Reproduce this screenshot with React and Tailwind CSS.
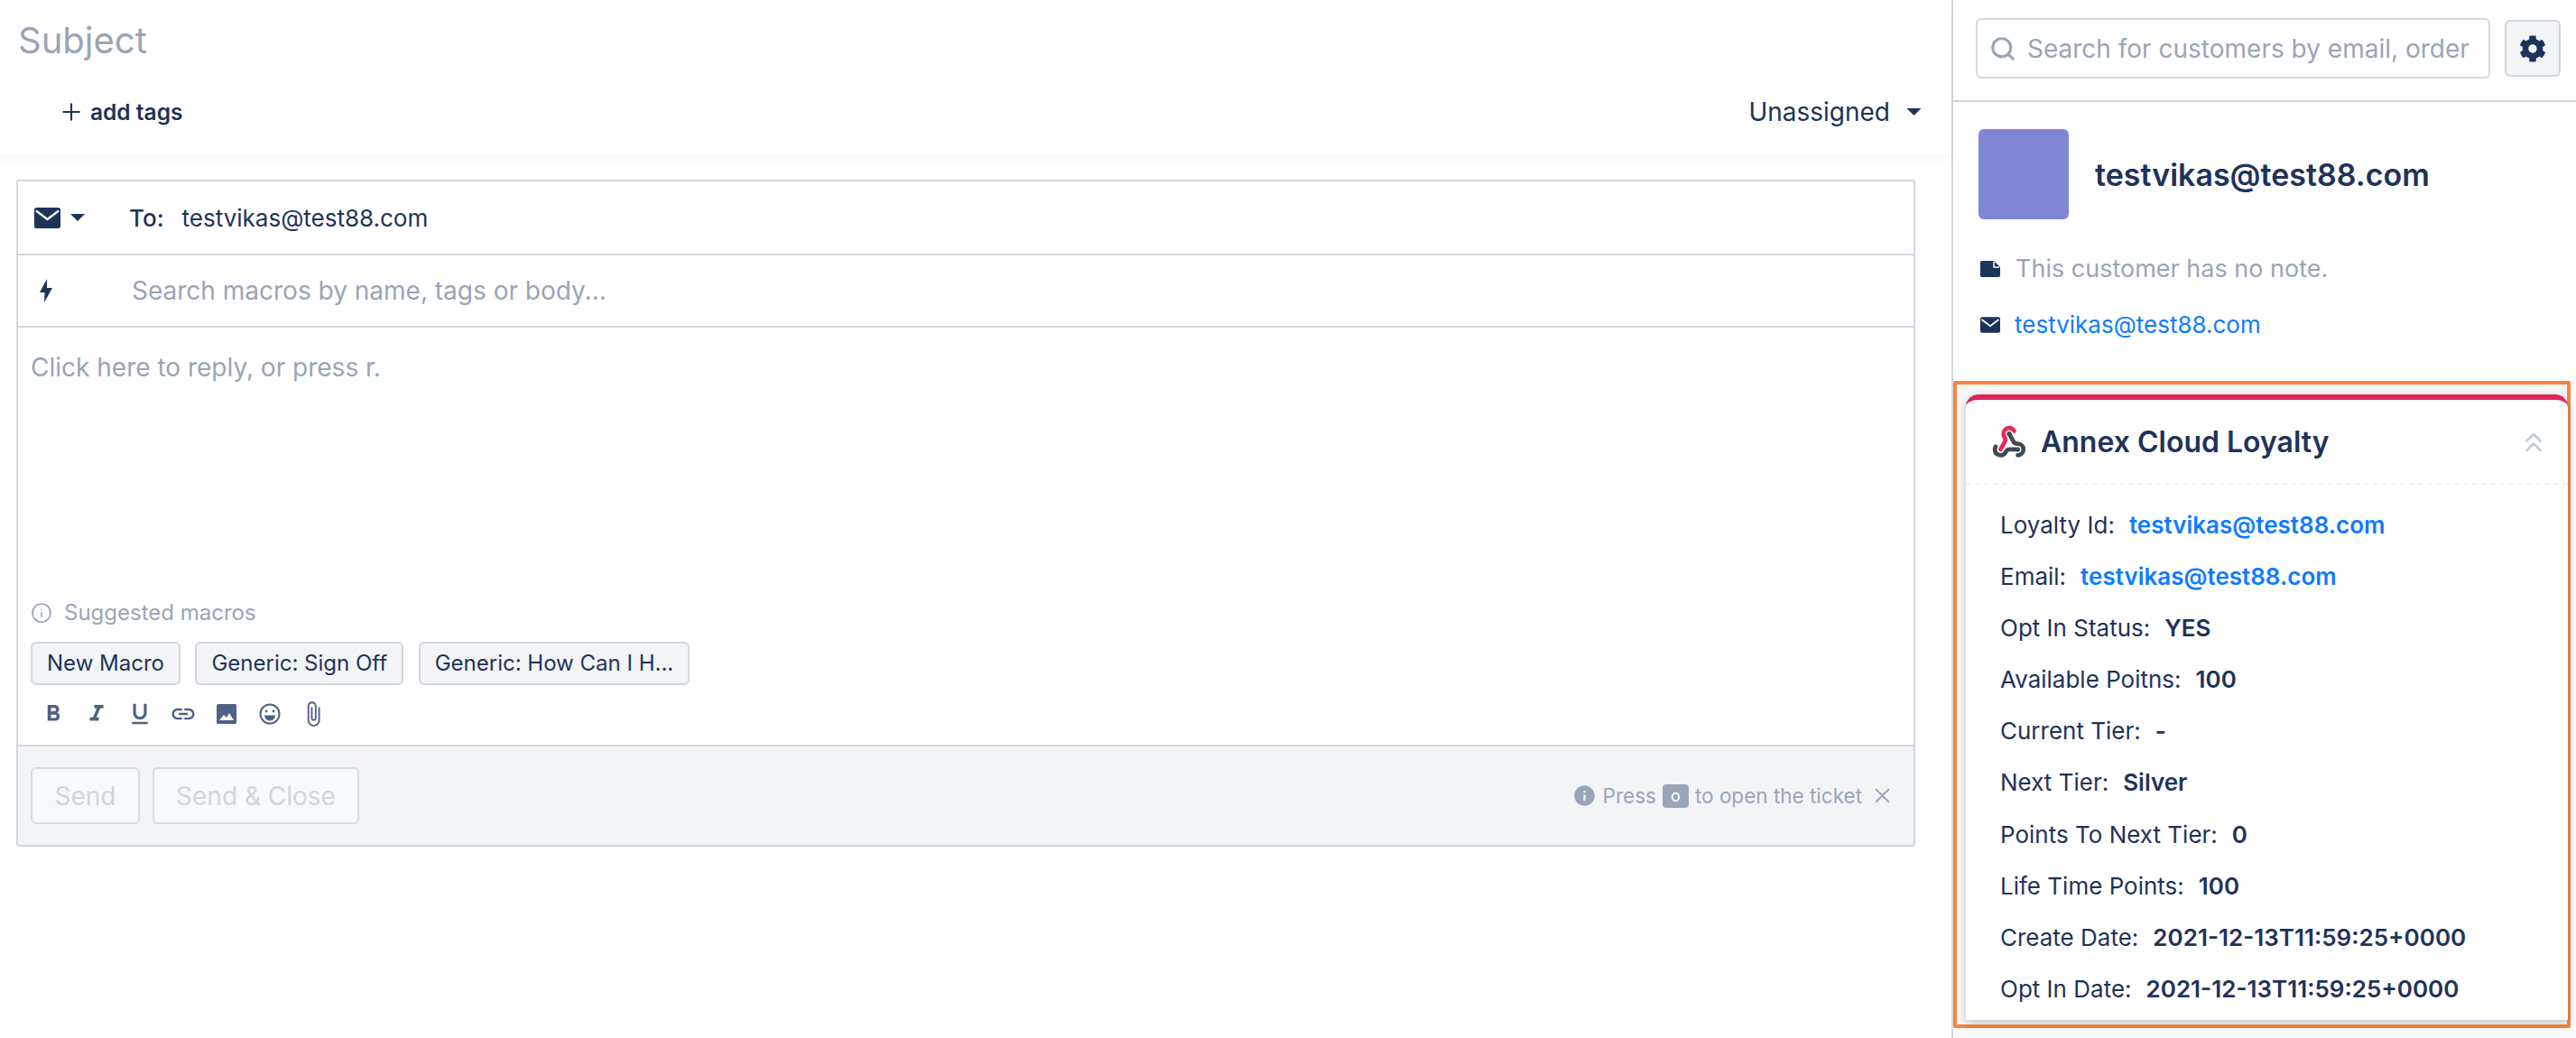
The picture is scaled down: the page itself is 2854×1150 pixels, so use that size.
import { Search, Plus, X, Info, ChevronsUp } from "lucide-react";
import { FaCog } from "react-icons/fa";
import {
  MdFormatBold,
  MdFormatItalic,
  MdFormatUnderlined,
  MdLink,
  MdAttachFile,
  MdInfo,
} from "react-icons/md";

const MailIcon = ({ className }) => (
  <svg viewBox="0 0 29 23" className={className}>
    <rect width="29" height="23" rx="2.5" fill="#1e3359" />
    <path d="M2 3.5 14.5 13 27 3.5" fill="none" stroke="#fff" strokeWidth="2.4" />
  </svg>
);

const Caret = ({ className }) => (
  <svg viewBox="0 0 16 8" className={className}>
    <path d="M0 0h16L8 8z" fill="#1e3359" />
  </svg>
);

const rows = [
  ["Loyalty Id:", "testvikas@test88.com", true],
  ["Email:", "testvikas@test88.com", true],
  ["Opt In Status:", "YES"],
  ["Available Poitns:", "100"],
  ["Current Tier:", "-"],
  ["Next Tier:", "Silver"],
  ["Points To Next Tier:", "0"],
  ["Life Time Points:", "100"],
  ["Create Date:", "2021-12-13T11:59:25+0000"],
  ["Opt In Date:", "2021-12-13T11:59:25+0000"],
];

const macros = ["New Macro", "Generic: Sign Off", "Generic: How Can I H..."];

export default function App() {
  return (
    <div className="flex h-[1150px] w-full overflow-hidden bg-white font-['Inter',sans-serif] text-[#1e3359]">
      <div className="w-[2162px] shrink-0">
        <div className="relative h-[171px] shadow-[0_6px_10px_rgba(30,51,89,0.035)]">
          <div className="pl-[20px] pt-[22px] text-[40px] leading-[46px] font-normal text-[#99a5b6]">Subject</div>
          <div className="mt-[41px] flex items-center justify-between pl-[64px] pr-[33px]">
            <div className="flex items-center gap-[6px] text-[24.5px] leading-[30px] font-semibold">
              <Plus className="h-[30px] w-[30px]" strokeWidth={1.7} />
              add tags
            </div>
            <div className="flex items-center gap-[18px] text-[28px] leading-[30px]">
              Unassigned
              <Caret className="h-[8px] w-[17px]" />
            </div>
          </div>
        </div>

        <div className="ml-[18px] mt-[28px] h-[739px] w-[2104px] rounded-[3px] border-2 border-[#d2d7de]">
          <div className="flex h-[82px] items-center border-b-2 border-[#d2d7de] pl-[18px] text-[26px]">
            <MailIcon className="h-[23px] w-[29px]" />
            <Caret className="ml-[11px] h-[8px] w-[16px]" />
            <span className="ml-[49px] font-medium">To:</span>
            <span className="ml-[20px]">testvikas@test88.com</span>
          </div>
          <div className="flex h-[80px] items-center border-b-2 border-[#d2d7de] pl-[24px] text-[28px] text-[#99a5b6]">
            <svg viewBox="0 0 14 26" className="h-[26px] w-[14px]">
              <path d="M8 0 0 15h5.5L5 26l9-16H8z" fill="#1e3359" />
            </svg>
            <span className="ml-[88px]">Search macros by name, tags or body...</span>
          </div>
          <div className="flex h-[464px] flex-col border-b-2 border-[#d2d7de] pl-[14px]">
            <div className="mt-[29px] text-[28px] leading-[30px] text-[#99a5b6]">Click here to reply, or press r.</div>
            <div className="mt-[243px] flex items-center gap-[13px] text-[24px] leading-[28px] text-[#99a5b6]">
              <Info className="h-[24px] w-[24px]" strokeWidth={1.7} />
              Suggested macros
            </div>
            <div className="mt-[18px] flex gap-[16.5px]">
              {macros.map((m) => (
                <div
                  key={m}
                  className="flex h-[48px] items-center rounded-[6px] border-2 border-[#d2d7de] bg-[#f3f4f6] px-[16px] text-[24px]"
                >
                  {m}
                </div>
              ))}
            </div>
            <div className="mt-[17px] flex items-center gap-[18px] pl-[10px] text-[#4f6285]">
              <MdFormatBold className="h-[30px] w-[30px]" />
              <MdFormatItalic className="h-[30px] w-[30px]" />
              <MdFormatUnderlined className="h-[30px] w-[30px]" />
              <MdLink className="h-[30px] w-[30px]" />
              <svg viewBox="0 0 22 22" className="mx-[4px] h-[22px] w-[22px]">
                <rect width="22" height="22" rx="1.5" fill="#4f6285" />
                <path d="M3 18l5-6 3 3 3-5 5 8z" fill="#fff" />
              </svg>
              <svg viewBox="0 0 24 24" className="mx-[3px] h-[24px] w-[24px]" fill="none" stroke="#4f6285" strokeWidth="2">
                <circle cx="12" cy="12" r="10.5" />
                <circle cx="8" cy="9" r="1.4" fill="#4f6285" stroke="none" />
                <circle cx="16" cy="9" r="1.4" fill="#4f6285" stroke="none" />
                <path d="M6 13.5h12c0 3.5-2.6 6-6 6s-6-2.5-6-6z" fill="#4f6285" stroke="none" />
              </svg>
              <MdAttachFile className="h-[30px] w-[30px]" />
            </div>
          </div>
          <div className="flex h-[109px] items-center justify-between bg-[#f3f4f6] pl-[14px] pr-[21px]">
            <div className="flex gap-[14px] text-[28px] text-[#d0d5dd]">
              <div className="flex h-[63px] w-[121px] items-center justify-center rounded-[6px] border-2 border-[#d8dce2] bg-[#f8f9fa]">
                Send
              </div>
              <div className="flex h-[63px] w-[229px] items-center justify-center rounded-[6px] border-2 border-[#d8dce2] bg-[#f8f9fa]">
                Send &amp; Close
              </div>
            </div>
            <div className="flex items-center text-[22.5px] text-[#99a5b6]">
              <MdInfo className="mr-[7px] h-[27px] w-[27px]" />
              Press
              <span className="mx-[7px] flex h-[26px] w-[29px] items-center justify-center rounded-[4px] bg-[#99a5b6] text-[18px] text-white">
                o
              </span>
              to open the ticket
              <X className="ml-[9px] h-[27px] w-[27px]" strokeWidth={1.6} />
            </div>
          </div>
        </div>
      </div>

      <div className="min-w-0 flex-1 border-l-2 border-[#d2d7de] bg-[#fafafb]">
        <div className="flex h-[113px] items-center gap-[16px] border-b-2 border-[#d2d7de] bg-white pb-[4px] pl-[25px]">
          <div className="flex h-[67px] w-[570px] items-center rounded-[6px] border-2 border-[#d2d7de] pl-[13px] text-[28px] text-[#99a5b6]">
            <Search className="h-[30px] w-[30px]" strokeWidth={2.5} />
            <span className="ml-[12px] whitespace-nowrap">Search for customers by email, order</span>
          </div>
          <div className="flex h-[63px] w-[62px] items-center justify-center rounded-[6px] border-2 border-[#d2d7de] bg-[#f3f4f6]">
            <FaCog className="h-[30px] w-[30px]" />
          </div>
        </div>
        <div className="h-[309px] bg-white pl-[28px] pt-[30px]">
          <div className="flex items-center gap-[29px]">
            <div className="h-[100px] w-[100px] rounded-[6px] bg-[#8088d6]" />
            <div className="pt-[1px] text-[34px] font-semibold">testvikas@test88.com</div>
          </div>
          <div className="mt-[38px] flex items-center text-[27px] leading-[34px] text-[#99a5b6]">
            <svg viewBox="0 0 22 18" className="ml-[2px] h-[18px] w-[22px]">
              <path d="M2 0h13l7 7v9a2 2 0 0 1-2 2H2a2 2 0 0 1-2-2V2a2 2 0 0 1 2-2z" fill="#1e3359" />
              <path d="M15 1v6h6" fill="none" stroke="#fff" strokeWidth="1.5" />
            </svg>
            <span className="ml-[17px]">This customer has no note.</span>
          </div>
          <div className="mt-[29px] flex items-center text-[26px] leading-[32px] text-[#0f7bff]">
            <MailIcon className="ml-[2px] h-[18px] w-[22px]" />
            <span className="ml-[16px]">testvikas@test88.com</span>
          </div>
        </div>

        <div className="h-[717px] w-[684px] rounded-[2px] border-4 border-[#f5843c] bg-[#f6f6f7] pl-[10px] pt-[11px]">
          <div className="h-[693px] w-[667px] rounded-t-[14px] border-t-[6px] border-[#dc2462] bg-white shadow-[0_3px_8px_rgba(30,51,89,0.25)]">
            <div className="flex h-[94px] items-center border-b-2 border-dashed border-[#f1f2f4] pl-[29px] pr-[20px] pt-[2px]">
              <svg viewBox="0 0 24 24" className="h-[38px] w-[38px]" fill="none" strokeWidth="3" strokeLinecap="round" strokeLinejoin="round">
                <path d="M18 16.98h-5.99c-1.1 0-1.95.94-2.48 1.9A4 4 0 0 1 2 17c.01-.7.2-1.4.57-2" stroke="#3f4a52" />
                <path d="m12 6 3.13 5.73C15.66 12.7 16.9 13 18 13a4 4 0 0 1 0 8" stroke="#3f4a52" />
                <path d="m6 17 3.13-5.78c.53-.97.1-2.18-.5-3.1a4 4 0 1 1 6.89-4.06" stroke="#e8265e" />
                <circle cx="12" cy="6" r="1.6" fill="#3f4a52" stroke="none" />
                <circle cx="18" cy="17" r="1.6" fill="#3f4a52" stroke="none" />
              </svg>
              <div className="ml-[16px] text-[32px] font-semibold">Annex Cloud Loyalty</div>
              <ChevronsUp className="ml-auto h-[36px] w-[36px] text-[#c5cbd5]" strokeWidth={1.8} />
            </div>
            <div className="flex flex-col gap-[25.2px] pl-[38px] pt-[28px]">
              {rows.map(([label, value, link]) => (
                <div key={label} className="flex h-[32px] items-center gap-[16px] text-[26px]">
                  <span>{label}</span>
                  <span className={link ? "font-semibold text-[#0f7bff]" : "font-semibold"}>{value}</span>
                </div>
              ))}
            </div>
          </div>
        </div>
      </div>
    </div>
  );
}
